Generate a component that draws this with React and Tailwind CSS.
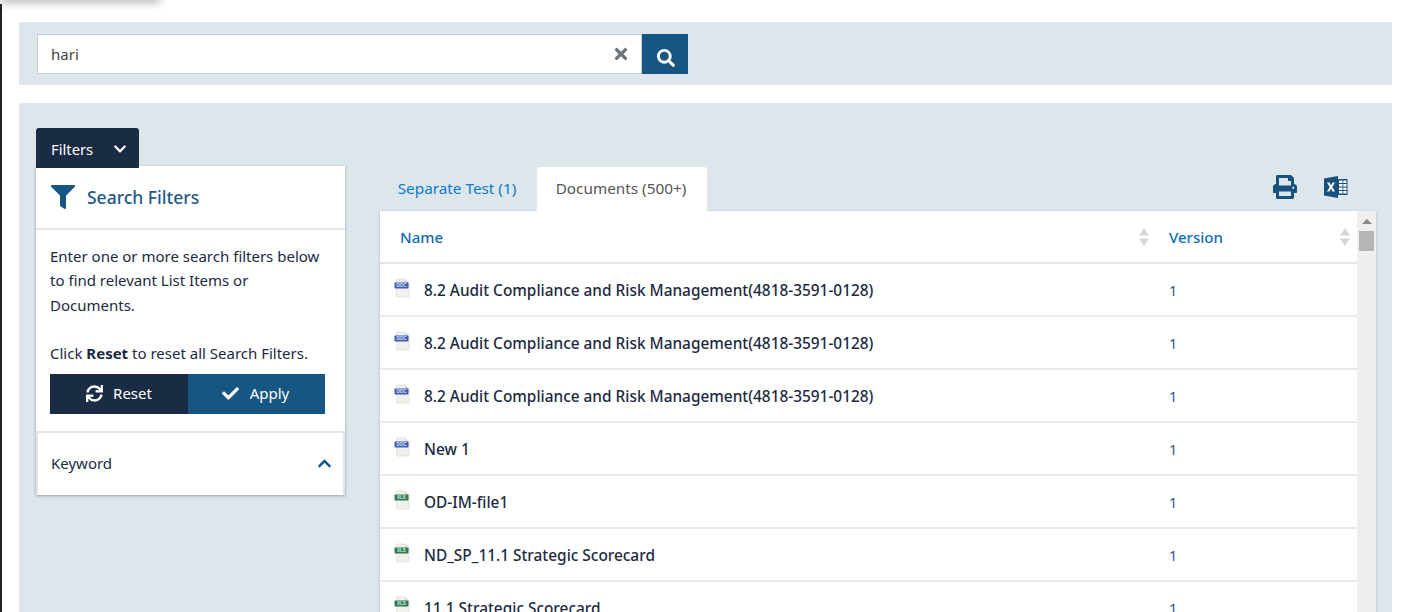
import { FaSearch, FaTimes, FaFilter, FaChevronDown, FaChevronUp, FaSync, FaCheck, FaPrint } from "react-icons/fa";

const rows = [
  { name: "8.2 Audit Compliance and Risk Management(4818-3591-0128)", type: "doc" },
  { name: "8.2 Audit Compliance and Risk Management(4818-3591-0128)", type: "doc" },
  { name: "8.2 Audit Compliance and Risk Management(4818-3591-0128)", type: "doc" },
  { name: "New 1", type: "doc" },
  { name: "OD-IM-file1", type: "xls" },
  { name: "ND_SP_11.1 Strategic Scorecard", type: "xls" },
  { name: "11.1 Strategic Scorecard", type: "xls" },
];

const FileIcon = ({ type }) => {
  const color = type === "doc" ? "#3f5fb5" : "#2f7d4f";
  return (
    <svg width="17" height="20" viewBox="0 0 17 20" className="-mt-[4px] shrink-0">
      <path d="M2.5 1h8.5l4 4v14h-12.500z" fill="#f1f0ea" stroke="#dfdfda" strokeWidth="0.8" />
      <path d="M11 1v4h4z" fill="#dcdcd6" />
      <rect x="0.500" y="4.500" width="14" height="6" rx="0.800" fill={color} />
      <text x="7.500" y="9.200" textAnchor="middle" fontSize="4.500" fontWeight="700" fill="#dfe6f5" fontFamily="Liberation Sans, sans-serif">
        {type === "doc" ? "DOC" : "XLS"}
      </text>
    </svg>
  );
};

const SortArrows = () => (
  <svg width="10" height="18" viewBox="0 0 10 18">
    <path d="M5 0l5 7.500H0z" fill="#d5d5d5" />
    <path d="M5 18l5-7.500H0z" fill="#d5d5d5" />
  </svg>
);

const ExcelIcon = () => (
  <svg width="24" height="24" viewBox="0 0 24 24">
    <path d="M0 3.500L14 1v22L0 20.500z" fill="#17517e" />
    <path d="M14 4h9.500v16H14z" fill="#17517e" />
    <path d="M15 5.500h3.500v2.600H15zm4.300 0h3.200v2.600h-3.200zM15 9h3.500v2.600H15zm4.300 0h3.200v2.600h-3.200zM15 12.500h3.500v2.600H15zm4.300 0h3.200v2.600h-3.200zM15 16h3.500v2.600H15zm4.300 0h3.200v2.600h-3.200z" fill="#fff" />
    <path d="M3 7.500h2.500L7 10.400l1.600-2.900H11l-2.700 4.400L11 16.500H8.500L7 13.500l-1.600 3H3l2.700-4.600z" fill="#fff" />
  </svg>
);

const App = () => {
  return (
    <div className="relative h-[612px] overflow-hidden bg-white font-['Noto_Sans',sans-serif] text-[15px] text-[#1c2a3f]">
      {/* shadow left by a menu above the crop */}
      <div className="absolute left-0 top-[-10px] h-[10px] w-[160px] bg-white shadow-[0_3px_9px_rgba(0,0,0,0.28)]" />

      <div className="ml-0 mt-[4px] h-[608px] border-l-2 border-[#222] pl-[17px] pr-[17px] pt-[18px]">
        {/* Search bar */}
        <div className="flex h-[63px] items-start bg-[#dce6eb] pl-[18px] pt-[12px]">
          <div className="flex h-[40px] w-[605px] items-center justify-between border border-[#c3ced6] bg-white pl-[13px] pr-[11px]">
            <span className="text-[#444]">hari</span>
            <FaTimes className="text-[18px] text-[#6b7378]" />
          </div>
          <button className="flex h-[40px] w-[46px] items-center justify-center bg-[#175583] pl-[2px] pt-[7px] text-white">
            <FaSearch className="text-[18px]" />
          </button>
        </div>

        {/* Main band */}
        <div className="mt-[18px] flex h-[600px] items-start bg-[#dce6eb] pl-[17px] pr-[16px] pt-[25px]">
          {/* Filters column */}
          <div className="w-[309px] shrink-0">
            <button className="relative z-10 flex h-[40px] w-[103px] items-center justify-between rounded-t-[3px] bg-[#1a2b44] pl-[15px] pr-[12px] pt-[2px] text-[14.800px] text-white">
              Filters
              <FaChevronDown className="text-[14px]" />
            </button>
            <div className="-mt-[2px] bg-white shadow-[0_1px_3px_rgba(0,0,0,0.3)]">
              <div className="flex h-[64px] items-center gap-[12px] border-b-2 border-[#e3e6e9] pl-[15px]">
                <FaFilter className="text-[24px] text-[#175583]" />
                <span className="text-[17.500px] font-medium text-[#1f5a86]">Search Filters</span>
              </div>
              <div className="px-[14px] pt-[14px] text-[15px] leading-[24.330px]">
                <p className="whitespace-nowrap">Enter one or more search filters below</p>
                <p className="whitespace-nowrap">to find relevant List Items or</p>
                <p>Documents.</p>
                <p className="mt-[24.330px] whitespace-nowrap">
                  Click <b>Reset</b> to reset all Search Filters.
                </p>
                <div className="mt-[8px] flex h-[40px] w-[275px] text-white">
                  <button className="flex w-[138px] items-center justify-center gap-[10px] bg-[#1a2b44]">
                    <FaSync className="text-[17px]" />
                    Reset
                  </button>
                  <button className="flex flex-1 items-center justify-center gap-[11px] bg-[#175583] pr-[2px]">
                    <FaCheck className="text-[17px]" />
                    Apply
                  </button>
                </div>
              </div>
              <div className="mt-[17px] flex h-[64px] items-center justify-between border-2 border-b-0 border-[#e3e6e9] pl-[13px] pr-[11px]">
                Keyword
                <FaChevronUp className="text-[15px] text-[#175583]" />
              </div>
            </div>
          </div>

          {/* Results column */}
          <div className="ml-[34px] flex-1 pt-[39px]">
            <div className="flex h-[44px] items-end justify-between pr-[28px]">
              <div className="flex h-[44px] text-[15.300px]">
                <a className="flex w-[158px] items-center justify-center pb-[1px] pr-[2px] text-[#0a7ad1]">Separate Test (1)</a>
                <span className="flex w-[170px] items-center justify-center rounded-t-[3px] bg-white pb-[1px] pr-[2px] text-[#555]">Documents (500+)</span>
              </div>
              <div className="flex items-center gap-[27px] pb-[12px] text-[#17517e]">
                <FaPrint className="text-[24px]" />
                <ExcelIcon />
              </div>
            </div>
            <div className="ml-px flex bg-white shadow-[0_1px_3px_rgba(0,0,0,0.2)]">
              <div className="flex-1">
                <div className="flex h-[53px] items-center border-b-2 border-[#e3e6e9] text-[15px] font-medium text-[#0f6cb8]">
                  <div className="flex w-[788px] items-center justify-between pl-[20px] pr-[19px]">
                    <span className="pt-[2px]">Name</span>
                    <SortArrows />
                  </div>
                  <div className="flex flex-1 items-center justify-between pl-[1px] pr-[7px]">
                    <span className="pt-[2px]">Version</span>
                    <SortArrows />
                  </div>
                </div>
                {rows.map((row, i) => (
                  <div key={i} className="flex h-[53px] items-center border-b-2 border-[#e8ebee] pt-[2px] text-[15.400px]">
                    <div className="flex w-[788px] items-center gap-[13px] pl-[14px]">
                      <FileIcon type={row.type} />
                      <span className="font-medium text-[#1c2a3f]">{row.name}</span>
                    </div>
                    <span className="pl-[1px] text-[14.500px] text-[#1f5a86]">1</span>
                  </div>
                ))}
              </div>
              <div className="w-[19px] shrink-0 bg-[#efefef] pt-[8px]">
                <div className="mx-auto h-0 w-0 border-x-[5px] border-b-[5px] border-x-transparent border-b-[#8a8a8a]" />
                <div className="mx-auto mt-[7px] h-[20px] w-[15px] bg-[#b5b5b5]" />
              </div>
            </div>
          </div>
        </div>
      </div>
    </div>
  );
};

export default App;
